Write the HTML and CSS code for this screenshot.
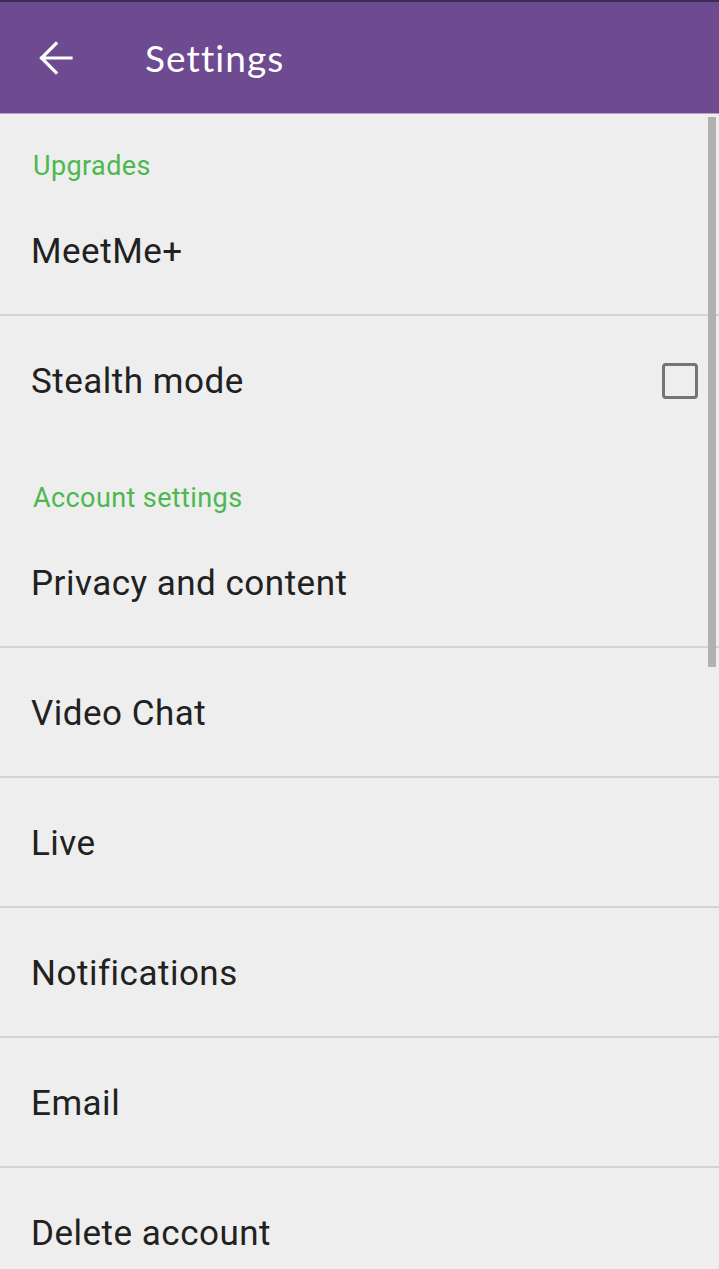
FILE: index.html
```html
<!DOCTYPE html>
<html>
<head>
<meta charset="utf-8">
<link rel="stylesheet" href="styles.css">
</head>
<body>
<div class="screen">
  <header class="appbar">
    <svg class="back" width="34" height="34" viewBox="0 0 34 34">
      <path d="M2.5 17 H32 M17 2.5 L2.5 17 L17 31.5" fill="none" stroke="#ffffff" stroke-width="3.2" stroke-linecap="square" stroke-linejoin="miter"/>
    </svg>
    <h1 class="title">Settings</h1>
  </header>
  <main class="list">
    <div class="category">Upgrades</div>
    <div class="row divided"><span class="label">MeetMe+</span></div>
    <div class="row tall"><span class="label">Stealth mode</span><span class="checkbox"></span></div>
    <div class="category">Account settings</div>
    <div class="row divided"><span class="label">Privacy and content</span></div>
    <div class="row divided"><span class="label">Video Chat</span></div>
    <div class="row divided"><span class="label">Live</span></div>
    <div class="row divided"><span class="label">Notifications</span></div>
    <div class="row divided"><span class="label">Email</span></div>
    <div class="row"><span class="label">Delete account</span></div>
    <div class="scrollbar"></div>
  </main>
</div>
</body>
</html>
```

FILE: styles.css
```css
html, body {
  margin: 0;
  padding: 0;
  background: #eeeeee;
}
.screen {
  width: 719px;
  height: 1269px;
  overflow: hidden;
  background: #eeeeee;
  font-family: Roboto, "Noto Sans", sans-serif;
}
.appbar {
  box-sizing: border-box;
  height: 114px;
  background: #6e4a91;
  border-top: 2px solid #3e2b55;
  border-bottom: 1px solid #b7a2cf;
  display: flex;
  align-items: center;
  padding-left: 39px;
}
.back {
  display: block;
  margin-top: 1px;
}
.title {
  margin: 0 0 0 72px;
  color: #ffffff;
  font-family: Lato, "Open Sans", sans-serif;
  font-weight: 400;
  font-size: 37px;
  line-height: 40px;
  letter-spacing: 1.1px;
}
.list {
  position: relative;
}
.category {
  box-sizing: border-box;
  height: 72px;
  padding: 37px 0 0 33px;
  color: #4cb84f;
  font-size: 27px;
  line-height: 30px;
  letter-spacing: 0.4px;
}
.row {
  box-sizing: border-box;
  height: 128px;
  display: flex;
  align-items: center;
  justify-content: space-between;
  padding: 2px 21px 0 31px;
  color: #212121;
  font-size: 35px;
  letter-spacing: 0.5px;
}
.row.divided {
  height: 130px;
  border-bottom: 2px solid #d4d4d4;
}
.row.tall {
  height: 130px;
  padding-top: 0;
}
.checkbox {
  box-sizing: border-box;
  width: 36px;
  height: 36px;
  border: 3.5px solid #757575;
  border-radius: 4px;
}
.scrollbar {
  position: absolute;
  top: 3px;
  right: 3px;
  width: 8px;
  height: 550px;
  background: #b0b0b0;
}
```
